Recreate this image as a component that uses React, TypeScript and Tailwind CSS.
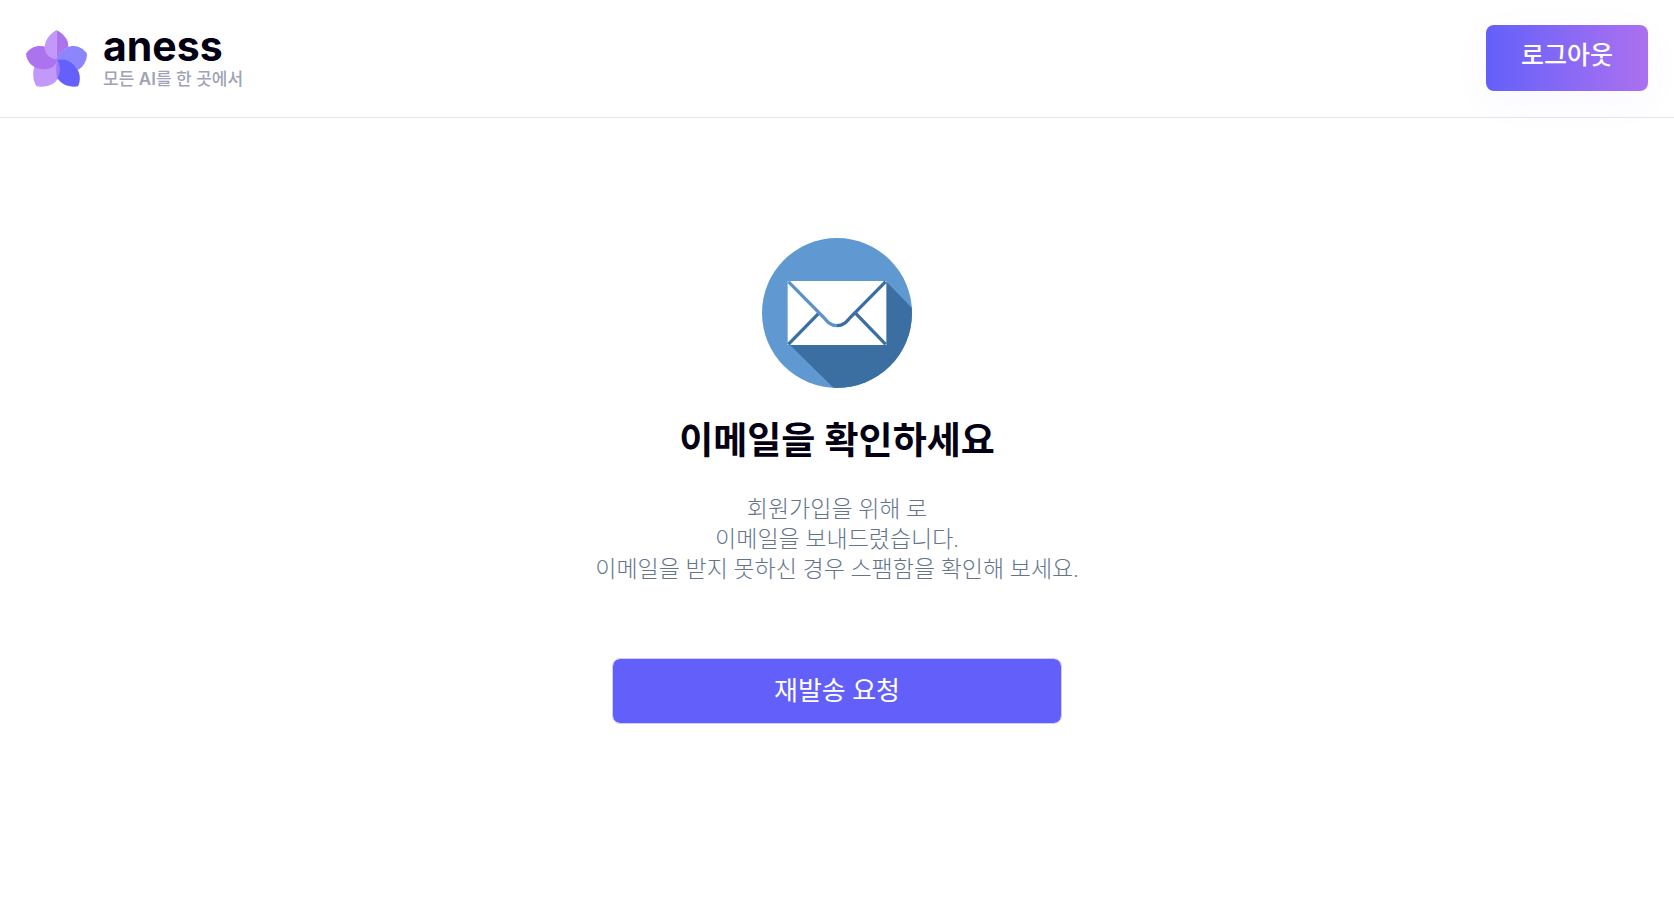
import React from 'react';

const FlowerLogo = () => (
  <svg className="w-[61px] h-[57px] shrink-0" viewBox="18 20 183 171" aria-hidden="true">
    <path fill="#8b86fb" d="M201 91C190 72 160 60 140 74C122 84 111 94 110 108C136 108 158 120 172 140C190 132 201 112 201 91Z" />
    <path fill="#c298fb" d="M46 124C36 142 38 172 49 188C66 193 104 190 117 160C122 144 121 124 112 108L80 110Z" />
    <path fill="#ac73ee" d="M18 91C32 70 56 64 78 71L112 108C109 126 96 138 72 138C42 138 20 118 18 91Z" />
    <path fill="#655ffb" d="M110 109C132 105 156 114 169 134C182 150 182 172 174 189C150 193 124 184 112 164C121 148 121 125 110 109Z" />
    <path fill="#a176f2" d="M112 109C121 125 122 148 111 166C108 148 108 126 112 109Z" />
    <path fill="#ac73ee" d="M109 20C132 32 147 50 145 71C130 80 114 90 110 108L109 108Z" />
    <path fill="#c298fb" d="M109 20C88 32 70 56 75 80C79 98 95 107 109 108Z" />
  </svg>
);

const MailIcon = () => (
  <svg className="size-[150px]" viewBox="0 0 450 450" aria-hidden="true">
    <defs>
      <clipPath id="disc">
        <circle cx="225" cy="225" r="225" />
      </clipPath>
    </defs>
    <g clipPath="url(#disc)">
      <rect width="450" height="450" fill="#6099d1" />
      <path d="M371 129L520 282V520H286L84 321Z" fill="#3b6fa2" />
    </g>
    <rect x="77" y="129" width="296" height="192" fill="#fff" />
    <g fill="none" strokeWidth="10">
      <path d="M79 319L170 226M371 319L281 226" stroke="#3b6fa2" />
      <path d="M371 131L266 237C252 254 243 263 225 263" stroke="#3b6fa2" />
      <path d="M79 131L184 237C198 254 207 263 225 263" stroke="#5c93ca" />
    </g>
  </svg>
);

const Header = () => (
  <header className="flex items-center justify-between px-[26px] py-[25px] pb-[26px] border-b border-[#e5e2f5]">
    <a href="#" className="flex items-center gap-4">
      <FlowerLogo />
      <div className="flex flex-col">
        <span className="font-['Inter',sans-serif] text-[41px] leading-[42px] font-bold text-[#030014]">aness</span>
        <span className="font-['Inter','Noto_Sans_CJK_KR',sans-serif] text-[17px] leading-6 font-medium text-[#a0a3b5]">
          모든 <b className="font-semibold">AI</b>를 한 곳에서
        </span>
      </div>
    </a>
    <button
      type="button"
      className="h-[66px] px-[35px] pb-1 rounded-lg bg-linear-to-r from-[#635ffa] to-[#ac70ef] text-[25px] font-medium text-white shadow-[0_10px_40px_rgba(99,95,250,0.04)]"
    >
      로그아웃
    </button>
  </header>
);

const App = () => (
  <div className="font-['Roboto','Noto_Sans_CJK_KR',sans-serif]">
    <Header />
    <main className="flex flex-col items-center px-4 pt-[120px] text-center">
      <MailIcon />
      <h1 className="mt-[29px] text-[37px] leading-[50px] font-bold text-[#030014]">이메일을 확인하세요</h1>
      <p className="mt-7 text-[23px] leading-[30px] font-light text-[#64748b]">
        회원가입을 위해 로
        <br />
        이메일을 보내드렸습니다.
        <br />
        이메일을 받지 못하신 경우 스팸함을 확인해 보세요.
      </p>
      <button
        type="button"
        className="mt-[73px] h-[66px] w-full max-w-[450px] rounded-lg border border-[#cfcbfd] bg-[#635ffa] bg-clip-padding text-[26px] text-white"
      >
        재발송 요청
      </button>
    </main>
  </div>
);

export default App;
